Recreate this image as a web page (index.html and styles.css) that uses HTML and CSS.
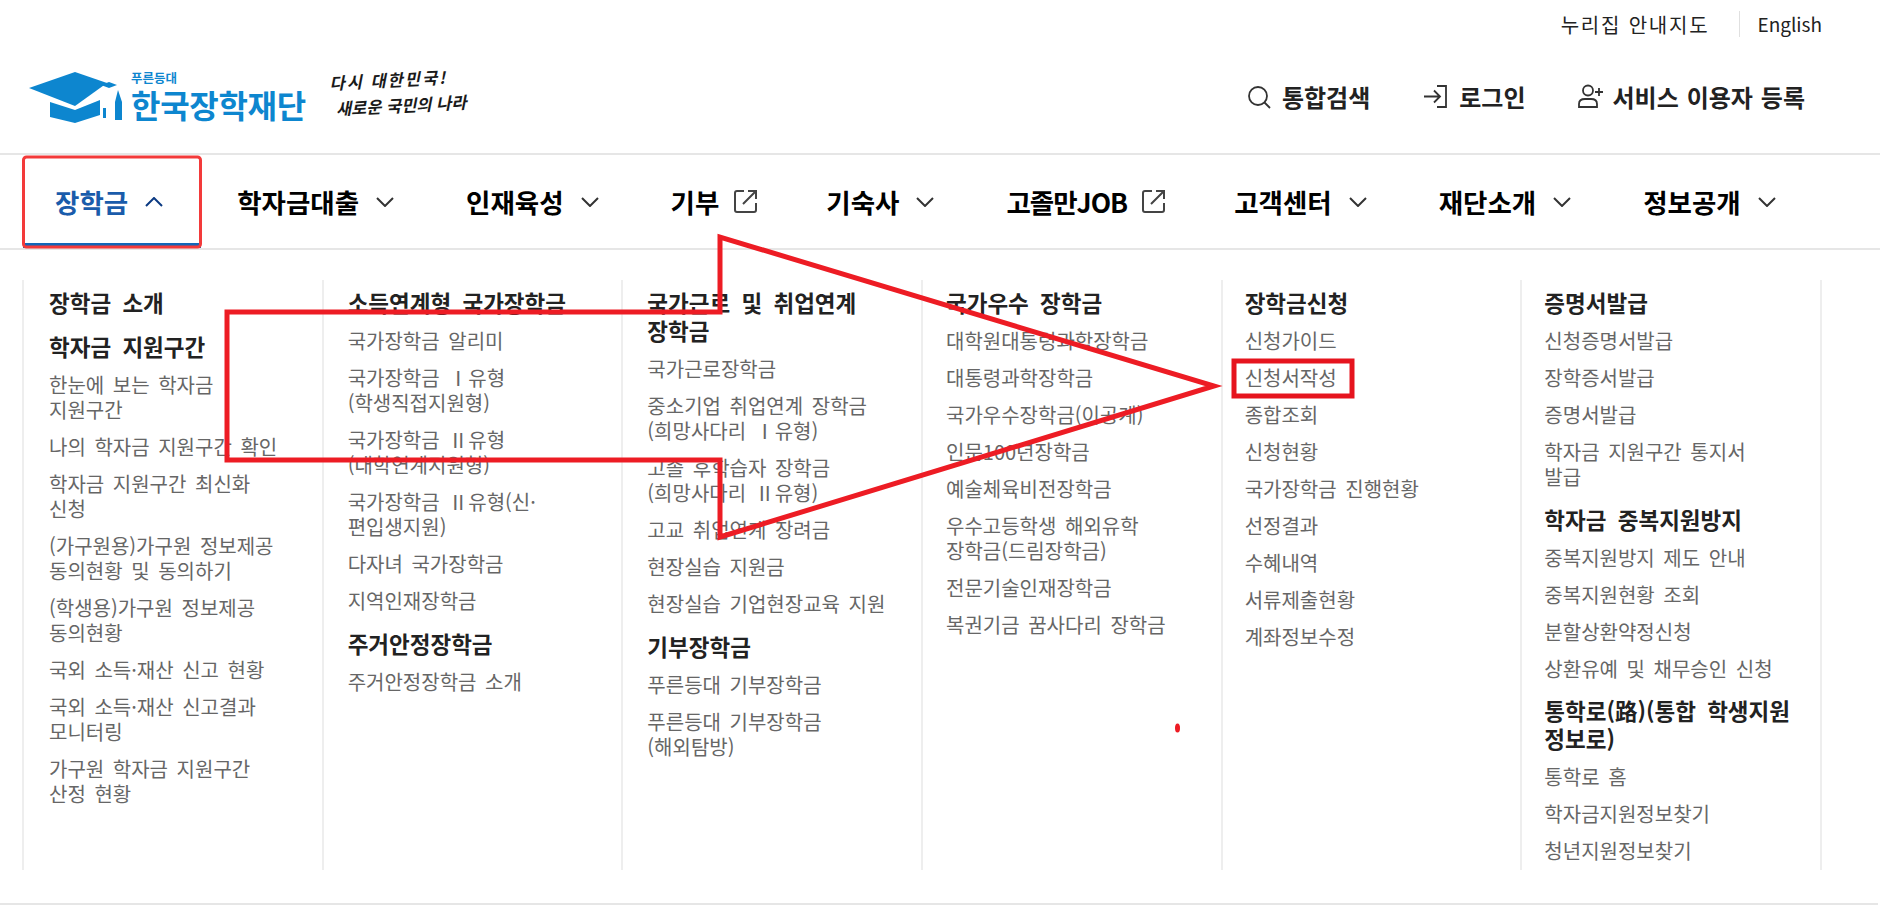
FILE: index.html
```html
<!DOCTYPE html>
<html lang="ko">
<head>
    <meta charset="UTF-8">
    <title>한국장학재단</title>
    <link rel="stylesheet" href="styles.css">
</head>
<body>
    <header class="site-header">
        <div class="top-links">
            <a class="top-link">누리집 안내지도</a>
            <a class="top-link lang">English</a>
        </div>
        <div class="brand-row">
            <div class="logo">
                <svg class="logo-cap" width="102" height="54" viewBox="0 0 102 54">
                    <path fill="#0d86cf" d="M0 16 46 0 78 11 46 34Z"/>
                    <path fill="#0d86cf" d="M21 30 46 38 71 28V43L46 51 21 45Z"/>
                    <path fill="#0d86cf" d="M72 13 80 10 88 13 80 16Z"/>
                    <rect fill="#0d86cf" x="74" y="36" width="3" height="10"/>
                    <path fill="#0d86cf" d="M86 30 89 18 93 30V48H86Z"/>
                </svg>
                <div class="logo-text">
                    <span class="logo-sub">푸른등대</span>
                    <span class="logo-name">한국장학재단</span>
                </div>
                <div class="slogan"><span class="slogan-1">다시 대한민국!</span><br><span class="slogan-2">새로운 국민의 나라</span></div>
            </div>
            <nav class="util-links">
                <a class="util-link">
                    <svg width="24" height="24" viewBox="0 0 24 24" fill="none" stroke="#333" stroke-width="1.8"><circle cx="11" cy="11" r="9"/><path d="M17.5 17.5 23 23"/></svg>
                    통합검색
                </a>
                <a class="util-link">
                    <svg width="25" height="25" viewBox="0 0 25 25" fill="none" stroke="#333" stroke-width="1.8"><path d="M14 2H23V23H14"/><path d="M1 12.5H17M11 6.5 17 12.5 11 18.5"/></svg>
                    로그인
                </a>
                <a class="util-link register">
                    <svg width="28" height="25" viewBox="0 0 28 25" fill="none" stroke="#333" stroke-width="1.8"><circle cx="11" cy="6.5" r="5"/><path d="M2 23V20Q2 15 8 15H14Q20 15 20 20V23H2Z"/><path d="M18 8H26M22 4V12"/></svg>
                    서비스 이용자 등록
                </a>
            </nav>
        </div>
    </header>

    <nav class="main-nav">
        <a class="nav-item active">장학금
            <svg class="chev" width="18" height="10" viewBox="0 0 18 10"><path d="M1 9 9 1 17 9"/></svg>
        </a>
        <a class="nav-item">학자금대출
            <svg class="chev" width="18" height="10" viewBox="0 0 18 10"><path d="M1 1 9 9 17 1"/></svg>
        </a>
        <a class="nav-item">인재육성
            <svg class="chev" width="18" height="10" viewBox="0 0 18 10"><path d="M1 1 9 9 17 1"/></svg>
        </a>
        <a class="nav-item">기부
            <svg class="ext" width="25" height="25" viewBox="0 0 25 25"><path d="M11 2H4Q2 2 2 4V21Q2 23 4 23H21Q23 23 23 21V14"/><path d="M10 15 23 2M15 2H23V10"/></svg>
        </a>
        <a class="nav-item">기숙사
            <svg class="chev" width="18" height="10" viewBox="0 0 18 10"><path d="M1 1 9 9 17 1"/></svg>
        </a>
        <a class="nav-item job">고졸만JOB
            <svg class="ext" width="25" height="25" viewBox="0 0 25 25"><path d="M11 2H4Q2 2 2 4V21Q2 23 4 23H21Q23 23 23 21V14"/><path d="M10 15 23 2M15 2H23V10"/></svg>
        </a>
        <a class="nav-item">고객센터
            <svg class="chev" width="18" height="10" viewBox="0 0 18 10"><path d="M1 1 9 9 17 1"/></svg>
        </a>
        <a class="nav-item">재단소개
            <svg class="chev" width="18" height="10" viewBox="0 0 18 10"><path d="M1 1 9 9 17 1"/></svg>
        </a>
        <a class="nav-item">정보공개
            <svg class="chev" width="18" height="10" viewBox="0 0 18 10"><path d="M1 1 9 9 17 1"/></svg>
        </a>
    </nav>

    <section class="mega-menu">
        <div class="menu-col">
            <h3>장학금 소개</h3>
            <h3>학자금 지원구간</h3>
            <a>한눈에 보는 학자금<br>지원구간</a>
            <a>나의 학자금 지원구간 확인</a>
            <a>학자금 지원구간 최신화<br>신청</a>
            <a>(가구원용)가구원 정보제공<br>동의현황 및 동의하기</a>
            <a>(학생용)가구원 정보제공<br>동의현황</a>
            <a>국외 소득·재산 신고 현황</a>
            <a>국외 소득·재산 신고결과<br>모니터링</a>
            <a>가구원 학자금 지원구간<br>산정 현황</a>
        </div>
        <div class="menu-col">
            <h3>소득연계형 국가장학금</h3>
            <a>국가장학금 알리미</a>
            <a>국가장학금 Ⅰ유형<br>(학생직접지원형)</a>
            <a>국가장학금 Ⅱ유형<br>(대학연계지원형)</a>
            <a>국가장학금 Ⅱ유형(신·<br>편입생지원)</a>
            <a>다자녀 국가장학금</a>
            <a>지역인재장학금</a>
            <h3>주거안정장학금</h3>
            <a>주거안정장학금 소개</a>
        </div>
        <div class="menu-col">
            <h3>국가근로 및 취업연계<br>장학금</h3>
            <a>국가근로장학금</a>
            <a>중소기업 취업연계 장학금<br>(희망사다리 Ⅰ유형)</a>
            <a>고졸 후학습자 장학금<br>(희망사다리 Ⅱ유형)</a>
            <a>고교 취업연계 장려금</a>
            <a>현장실습 지원금</a>
            <a>현장실습 기업현장교육 지원</a>
            <h3>기부장학금</h3>
            <a>푸른등대 기부장학금</a>
            <a>푸른등대 기부장학금<br>(해외탐방)</a>
        </div>
        <div class="menu-col">
            <h3>국가우수 장학금</h3>
            <a>대학원대통령과학장학금</a>
            <a>대통령과학장학금</a>
            <a>국가우수장학금(이공계)</a>
            <a>인문100년장학금</a>
            <a>예술체육비전장학금</a>
            <a>우수고등학생 해외유학<br>장학금(드림장학금)</a>
            <a>전문기술인재장학금</a>
            <a>복권기금 꿈사다리 장학금</a>
        </div>
        <div class="menu-col">
            <h3>장학금신청</h3>
            <a>신청가이드</a>
            <a>신청서작성</a>
            <a>종합조회</a>
            <a>신청현황</a>
            <a>국가장학금 진행현황</a>
            <a>선정결과</a>
            <a>수혜내역</a>
            <a>서류제출현황</a>
            <a>계좌정보수정</a>
        </div>
        <div class="menu-col">
            <h3>증명서발급</h3>
            <a>신청증명서발급</a>
            <a>장학증서발급</a>
            <a>증명서발급</a>
            <a>학자금 지원구간 통지서<br>발급</a>
            <h3>학자금 중복지원방지</h3>
            <a>중복지원방지 제도 안내</a>
            <a>중복지원현황 조회</a>
            <a>분할상환약정신청</a>
            <a>상환유예 및 채무승인 신청</a>
            <h3>통학로(路)(통합 학생지원<br>정보로)</h3>
            <a>통학로 홈</a>
            <a>학자금지원정보찾기</a>
            <a>청년지원정보찾기</a>
        </div>
    </section>

    <!-- 빨간 표시 (스크린샷 위에 그린 주석) -->
    <svg class="markup" width="1880" height="912" viewBox="0 0 1880 912">
        <rect class="mark-tab" x="23.5" y="157" width="177" height="90" rx="3"/>
        <path class="mark-arrow" d="M227 312H720V237L1214 386 720 537V460H227Z"/>
        <rect class="mark-box" x="1234" y="361" width="118" height="35"/>
        <ellipse class="mark-dot" cx="1177.5" cy="728" rx="2.5" ry="4.5"/>
    </svg>
</body>
</html>
```

FILE: styles.css
```css
html, body {
    margin: 0;
    padding: 0;
    height: 912px;
    overflow: hidden;
}

body {
    position: relative;
    background-color: #ffffff;
    font-family: "Noto Sans CJK KR", "Noto Sans", sans-serif;
    color: #222;
}

/* 상단 */
.site-header {
    border-bottom: 2px solid #e6e6e6;
    height: 153px;
}

.top-links {
    display: flex;
    justify-content: flex-end;
    align-items: center;
    height: 48px;
    padding-right: 58px;
    font-size: 20px;
    color: #222;
}

.top-link {
    letter-spacing: 1.8px;
}

.lang {
    font-size: 19px;
    letter-spacing: 0;
    margin-left: 30px;
    padding-left: 17px;
    border-left: 1px solid #e0e0e0;
    line-height: 26px;
}

.brand-row {
    display: flex;
    justify-content: space-between;
    align-items: center;
    height: 100px;
    padding: 0 75px 5px 29px;
    box-sizing: border-box;
}

.logo {
    display: flex;
    align-items: center;
}

.logo-cap {
    flex: none;
    margin-top: 6px;
}

.logo-text {
    display: flex;
    flex-direction: column;
    margin-left: 0;
    color: #0d86cf;
    font-weight: bold;
}

.logo-sub {
    font-size: 12.5px;
    line-height: 16px;
}

.logo-name {
    font-size: 32px;
    line-height: 36px;
    letter-spacing: -0.3px;
}

.slogan {
    margin: 0 0 8px 24px;
    width: 140px;
    font-size: 16.5px;
    line-height: 26px;
    font-weight: bold;
    font-style: italic;
    color: #1a1a1a;
    white-space: nowrap;
    transform: rotate(-3deg);
}

.slogan-1 {
    letter-spacing: 2px;
}

.slogan-2 {
    margin-left: 5px;
}

.util-links {
    display: flex;
    gap: 53px;
    margin-top: 2px;
}

.util-link {
    display: flex;
    align-items: center;
    gap: 11px;
    font-size: 24px;
    font-weight: bold;
    color: #222;
}

.util-link.register {
    margin-left: -2px;
    gap: 8px;
    word-spacing: 1.2px;
}

/* 메인 메뉴 */
.main-nav {
    display: flex;
    height: 93px;
    border-bottom: 2px solid #e6e6e6;
    padding-left: 23px;
}

.nav-item {
    display: flex;
    align-items: center;
    gap: 17px;
    padding: 0 36px;
    font-size: 26.5px;
    font-weight: bold;
    color: #000;
    box-sizing: border-box;
    white-space: nowrap;
}

.nav-item.active {
    padding: 0 38px 0 32px;
    color: #1a5cab;
    border-bottom: 5px solid #1266b8;
    border-top: 5px solid transparent;
}

.nav-item.job {
    letter-spacing: -1px;
}

.chev {
    fill: none;
    stroke: #333;
    stroke-width: 2;
}

.active .chev {
    stroke: #0b3a82;
}

.ext {
    fill: none;
    stroke: #444;
    stroke-width: 2;
    margin: 0 -4px 0 -3px;
}

/* 펼침 메뉴 */
.mega-menu {
    position: relative;
    display: grid;
    grid-template-columns: repeat(6, 1fr);
    margin: 30px 58px 0 22px;
    border-right: 2px solid #eee;
}

.mega-menu::after {
    content: "";
    position: absolute;
    left: -22px;
    right: -58px;
    bottom: -35px;
    border-bottom: 2px solid #e6e6e6;
}

.menu-col {
    border-left: 2px solid #eee;
    padding: 8px 10px 7px 25px;
    height: 575px;
}

/* 글자 시작 위치가 오른쪽 열로 갈수록 조금씩 줄어듦 */
.menu-col:nth-child(2) { padding-left: 24px; }
.menu-col:nth-child(3) { padding-left: 24px; }
.menu-col:nth-child(4) { padding-left: 23px; }
.menu-col:nth-child(5) { padding-left: 22px; }
.menu-col:nth-child(6) { padding-left: 22px; }

.menu-col h3 {
    margin: 15.5px 0 0;
    font-size: 22.5px;
    line-height: 28px;
    font-weight: bold;
    word-spacing: 5px;
    color: #222;
}

.menu-col h3:first-child {
    margin-top: 0;
}

.menu-col a {
    display: block;
    margin-top: 12px;
    font-size: 20px;
    line-height: 25px;
    word-spacing: 3px;
    color: #666;
    white-space: nowrap;
}

/* 빨간 표시 */
.markup {
    position: absolute;
    top: 0;
    left: 0;
    pointer-events: none;
}

.mark-tab {
    fill: none;
    stroke: #f33a3a;
    stroke-width: 3;
}

.mark-arrow {
    fill: none;
    stroke: #ed1c24;
    stroke-width: 5;
}

.mark-box {
    fill: none;
    stroke: #e6141e;
    stroke-width: 5;
}

.mark-dot {
    fill: #ed1c24;
}
```
